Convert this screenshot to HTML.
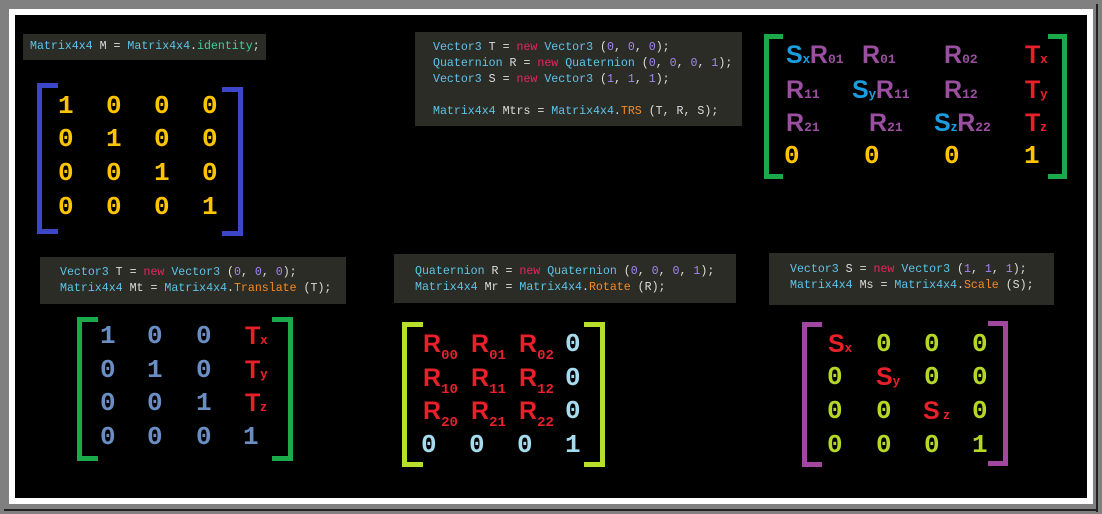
<!DOCTYPE html>
<html><head><meta charset="utf-8"><style>
html,body{margin:0;padding:0}
body{width:1102px;height:514px;background:#808080;position:relative;overflow:hidden}
.w{position:absolute;left:9px;top:9px;width:1084px;height:495px;background:#fff}
.b{position:absolute;left:15px;top:15px;width:1072px;height:483px;background:#000}
.sh1{position:absolute;left:1096px;top:4px;width:2px;height:508px;background:#222}
.sh2{position:absolute;left:4px;top:509px;width:1094px;height:2px;background:#222}
.code{position:absolute;background:#2c2c27;font-family:"Liberation Mono",monospace;font-size:11.6px;color:#dcdcdc;white-space:pre;line-height:16px}
.code div{position:absolute}
.t{color:#5cc4e8}.n{color:#e8245c}.num{color:#a286f0}.m{color:#f48a22}.g{color:#3ecf9a}
.br{position:absolute;border-style:solid;border-width:0}
.e{position:absolute;font-weight:bold;line-height:26px;white-space:nowrap}
.d{font-family:"Liberation Mono",monospace;font-size:26px}
.s{font-family:"Liberation Sans",sans-serif;font-size:25px}
.sub{font-family:"Liberation Mono",monospace;font-size:13px;font-weight:bold}
.sb{font-family:"Liberation Sans",sans-serif;font-size:13px;font-weight:bold}
.dn{font-family:"Liberation Mono",monospace;font-size:14px;font-weight:bold;position:relative;top:7px}
</style></head><body>
<div class="w"></div><div class="b"></div><div class="sh1"></div><div class="sh2"></div>

<!-- box 1 -->
<div class="code" style="left:23px;top:34px;width:243px;height:26px"><div style="left:7px;top:5px"><span class="t">Matrix4x4</span> M = <span class="t">Matrix4x4</span>.<span class="g">identity</span>;</div></div>
<div class="br" style="left:37px;top:83px;width:16px;height:141px;border-color:#3c46c8;border-width:5px 0 5px 5px"></div>
<div class="br" style="left:222px;top:87px;width:16px;height:139px;border-color:#3c46c8;border-width:5px 5px 5px 0"></div>
<div style="color:#ffc400">
<div class="e d" style="left:58px;top:93px">1</div><div class="e d" style="left:106px;top:93px">0</div><div class="e d" style="left:154px;top:93px">0</div><div class="e d" style="left:202px;top:93px">0</div>
<div class="e d" style="left:58px;top:126px">0</div><div class="e d" style="left:106px;top:126px">1</div><div class="e d" style="left:154px;top:126px">0</div><div class="e d" style="left:202px;top:126px">0</div>
<div class="e d" style="left:58px;top:160px">0</div><div class="e d" style="left:106px;top:160px">0</div><div class="e d" style="left:154px;top:160px">1</div><div class="e d" style="left:202px;top:160px">0</div>
<div class="e d" style="left:58px;top:194px">0</div><div class="e d" style="left:106px;top:194px">0</div><div class="e d" style="left:154px;top:194px">0</div><div class="e d" style="left:202px;top:194px">1</div>
</div>

<!-- box 2 -->
<div class="code" style="left:415px;top:32px;width:327px;height:94px">
<div style="left:18px;top:8px"><span class="t">Vector3</span> T = <span class="n">new</span> <span class="t">Vector3</span> (<span class="num">0</span>, <span class="num">0</span>, <span class="num">0</span>);</div>
<div style="left:18px;top:24px"><span class="t">Quaternion</span> R = <span class="n">new</span> <span class="t">Quaternion</span> (<span class="num">0</span>, <span class="num">0</span>, <span class="num">0</span>, <span class="num">1</span>);</div>
<div style="left:18px;top:40px"><span class="t">Vector3</span> S = <span class="n">new</span> <span class="t">Vector3</span> (<span class="num">1</span>, <span class="num">1</span>, <span class="num">1</span>);</div>
<div style="left:18px;top:72px"><span class="t">Matrix4x4</span> Mtrs = <span class="t">Matrix4x4</span>.<span class="m">TRS</span> (T, R, S);</div>
</div>
<div class="br" style="left:764px;top:34px;width:14px;height:135px;border-color:#1aaa4a;border-width:5px 0 5px 5px"></div>
<div class="br" style="left:1048px;top:34px;width:14px;height:135px;border-color:#1aaa4a;border-width:5px 5px 5px 0"></div>
<div class="e s" style="left:786px;top:42px"><span style="color:#1a9ee0">S<span class="sb">x</span></span><span style="color:#9b4fa0">R<span class="sub">01</span></span></div>
<div class="e s" style="left:862px;top:42px;color:#9b4fa0">R<span class="sub">01</span></div>
<div class="e s" style="left:944px;top:42px;color:#9b4fa0">R<span class="sub">02</span></div>
<div class="e s" style="left:1025px;top:42px;color:#e8202a">T<span class="sb">x</span></div>
<div class="e s" style="left:786px;top:77px;color:#9b4fa0">R<span class="sub">11</span></div>
<div class="e s" style="left:852px;top:77px"><span style="color:#1a9ee0">S<span class="sb">y</span></span><span style="color:#9b4fa0">R<span class="sub">11</span></span></div>
<div class="e s" style="left:944px;top:77px;color:#9b4fa0">R<span class="sub">12</span></div>
<div class="e s" style="left:1025px;top:77px;color:#e8202a">T<span class="sb">y</span></div>
<div class="e s" style="left:786px;top:110px;color:#9b4fa0">R<span class="sub">21</span></div>
<div class="e s" style="left:869px;top:110px;color:#9b4fa0">R<span class="sub">21</span></div>
<div class="e s" style="left:934px;top:110px"><span style="color:#1a9ee0">S<span class="sb">z</span></span><span style="color:#9b4fa0">R<span class="sub">22</span></span></div>
<div class="e s" style="left:1025px;top:110px;color:#e8202a">T<span class="sb">z</span></div>
<div style="color:#ffc400">
<div class="e d" style="left:784px;top:143px">0</div><div class="e d" style="left:864px;top:143px">0</div><div class="e d" style="left:944px;top:143px">0</div><div class="e d" style="left:1024px;top:143px">1</div>
</div>

<!-- box 3 -->
<div class="code" style="left:40px;top:257px;width:306px;height:47px">
<div style="left:20px;top:8px"><span class="t">Vector3</span> T = <span class="n">new</span> <span class="t">Vector3</span> (<span class="num">0</span>, <span class="num">0</span>, <span class="num">0</span>);</div>
<div style="left:20px;top:24px"><span class="t">Matrix4x4</span> Mt = <span class="t">Matrix4x4</span>.<span class="m">Translate</span> (T);</div>
</div>
<div class="br" style="left:77px;top:317px;width:16px;height:134px;border-color:#1aaa4a;border-width:5px 0 5px 5px"></div>
<div class="br" style="left:272px;top:317px;width:16px;height:134px;border-color:#1aaa4a;border-width:5px 5px 5px 0"></div>
<div style="color:#6a8ec4">
<div class="e d" style="left:100px;top:323px">1</div><div class="e d" style="left:147px;top:323px">0</div><div class="e d" style="left:196px;top:323px">0</div>
<div class="e d" style="left:100px;top:357px">0</div><div class="e d" style="left:147px;top:357px">1</div><div class="e d" style="left:196px;top:357px">0</div>
<div class="e d" style="left:100px;top:390px">0</div><div class="e d" style="left:147px;top:390px">0</div><div class="e d" style="left:196px;top:390px">1</div>
<div class="e d" style="left:100px;top:424px">0</div><div class="e d" style="left:147px;top:424px">0</div><div class="e d" style="left:196px;top:424px">0</div><div class="e d" style="left:243px;top:424px">1</div>
</div>
<div class="e s" style="left:245px;top:323px;color:#e8202a">T<span class="sb">x</span></div>
<div class="e s" style="left:245px;top:357px;color:#e8202a">T<span class="sb">y</span></div>
<div class="e s" style="left:245px;top:390px;color:#e8202a">T<span class="sb">z</span></div>

<!-- box 4 -->
<div class="code" style="left:394px;top:254px;width:342px;height:49px">
<div style="left:21px;top:10px"><span class="t">Quaternion</span> R = <span class="n">new</span> <span class="t">Quaternion</span> (<span class="num">0</span>, <span class="num">0</span>, <span class="num">0</span>, <span class="num">1</span>);</div>
<div style="left:21px;top:26px"><span class="t">Matrix4x4</span> Mr = <span class="t">Matrix4x4</span>.<span class="m">Rotate</span> (R);</div>
</div>
<div class="br" style="left:402px;top:322px;width:16px;height:135px;border-color:#b8e02a;border-width:5px 0 5px 5px"></div>
<div class="br" style="left:584px;top:322px;width:16px;height:135px;border-color:#b8e02a;border-width:5px 5px 5px 0"></div>
<div style="color:#e8202a">
<div class="e s" style="left:423px;top:331px">R<span class="dn">00</span></div><div class="e s" style="left:471px;top:331px">R<span class="dn">01</span></div><div class="e s" style="left:519px;top:331px">R<span class="dn">02</span></div>
<div class="e s" style="left:423px;top:365px">R<span class="dn">10</span></div><div class="e s" style="left:471px;top:365px">R<span class="dn">11</span></div><div class="e s" style="left:519px;top:365px">R<span class="dn">12</span></div>
<div class="e s" style="left:423px;top:398px">R<span class="dn">20</span></div><div class="e s" style="left:471px;top:398px">R<span class="dn">21</span></div><div class="e s" style="left:519px;top:398px">R<span class="dn">22</span></div>
</div>
<div style="color:#a6dcef">
<div class="e d" style="left:565px;top:331px">0</div><div class="e d" style="left:565px;top:365px">0</div><div class="e d" style="left:565px;top:398px">0</div>
<div class="e d" style="left:421px;top:432px">0</div><div class="e d" style="left:469px;top:432px">0</div><div class="e d" style="left:517px;top:432px">0</div><div class="e d" style="left:565px;top:432px">1</div>
</div>

<!-- box 5 -->
<div class="code" style="left:769px;top:253px;width:285px;height:52px">
<div style="left:21px;top:9px"><span class="t">Vector3</span> S = <span class="n">new</span> <span class="t">Vector3</span> (<span class="num">1</span>, <span class="num">1</span>, <span class="num">1</span>);</div>
<div style="left:21px;top:25px"><span class="t">Matrix4x4</span> Ms = <span class="t">Matrix4x4</span>.<span class="m">Scale</span> (S);</div>
</div>
<div class="br" style="left:802px;top:322px;width:15px;height:135px;border-color:#a048a0;border-width:5px 0 5px 5px"></div>
<div class="br" style="left:988px;top:321px;width:15px;height:135px;border-color:#a048a0;border-width:5px 5px 5px 0"></div>
<div style="color:#b5d826">
<div class="e d" style="left:876px;top:331px">0</div><div class="e d" style="left:924px;top:331px">0</div><div class="e d" style="left:972px;top:331px">0</div>
<div class="e d" style="left:827px;top:364px">0</div><div class="e d" style="left:924px;top:364px">0</div><div class="e d" style="left:972px;top:364px">0</div>
<div class="e d" style="left:827px;top:398px">0</div><div class="e d" style="left:876px;top:398px">0</div><div class="e d" style="left:972px;top:398px">0</div>
<div class="e d" style="left:827px;top:432px">0</div><div class="e d" style="left:876px;top:432px">0</div><div class="e d" style="left:924px;top:432px">0</div><div class="e d" style="left:972px;top:432px">1</div>
</div>
<div class="e s" style="left:828px;top:331px;color:#e8202a">S<span class="sb">x</span></div>
<div class="e s" style="left:876px;top:364px;color:#e8202a">S<span class="sb">y</span></div>
<div class="e s" style="left:923px;top:398px;color:#e8202a">S<span class="sb"> z</span></div>
</body></html>
